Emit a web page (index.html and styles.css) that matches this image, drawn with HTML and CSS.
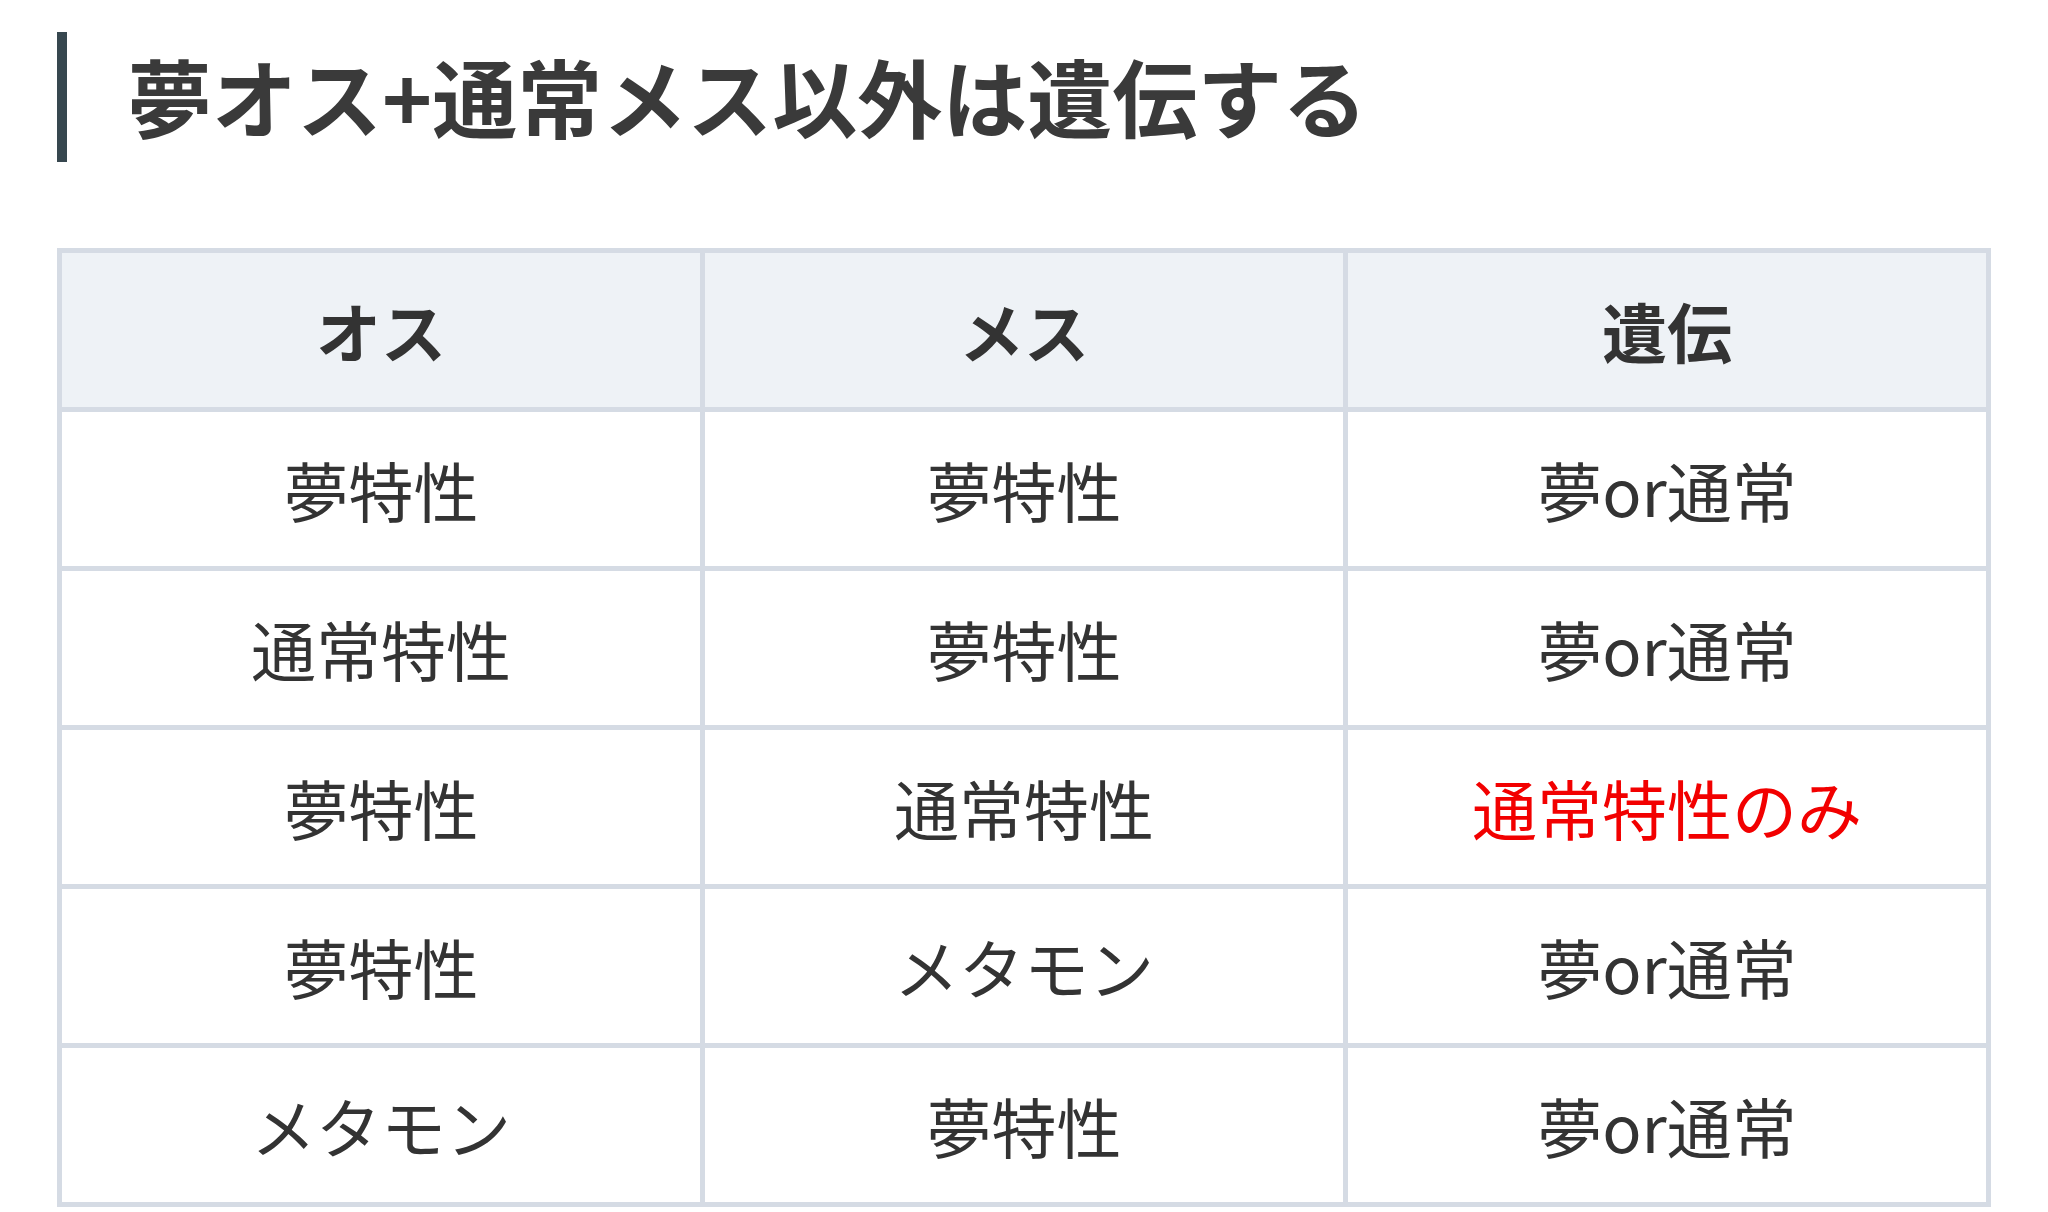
FILE: index.html
```html
<!DOCTYPE html>
<html lang="ja">
<head>
<meta charset="utf-8">
<title>夢特性の遺伝</title>
<link rel="stylesheet" href="styles.css">
</head>
<body>
<h2 class="heading">夢オス+通常メス以外は遺伝する</h2>
<table class="inherit-table">
  <thead>
    <tr><th>オス</th><th>メス</th><th>遺伝</th></tr>
  </thead>
  <tbody>
    <tr><td>夢特性</td><td>夢特性</td><td>夢or通常</td></tr>
    <tr><td>通常特性</td><td>夢特性</td><td>夢or通常</td></tr>
    <tr><td>夢特性</td><td>通常特性</td><td class="red">通常特性のみ</td></tr>
    <tr><td>夢特性</td><td>メタモン</td><td>夢or通常</td></tr>
    <tr><td>メタモン</td><td>夢特性</td><td>夢or通常</td></tr>
  </tbody>
</table>
</body>
</html>
```
FILE: styles.css
```css
html, body {
  margin: 0;
  padding: 0;
  background: #ffffff;
}
body {
  padding: 0 57px;
  font-family: "Noto Sans CJK JP", "Noto Sans", sans-serif;
  color: #333333;
}
.heading {
  margin: 32px 0 0 0;
  height: 130px;
  line-height: 126px;
  border-left: 10px solid #37474f;
  padding-left: 60px;
  font-size: 85px;
  font-weight: 700;
  color: #3a3a3a;
  letter-spacing: 0;
  white-space: nowrap;
}
.inherit-table {
  margin-top: 86px;
  width: 100%;
  table-layout: fixed;
  border-collapse: separate;
  border-spacing: 0;
  border-top: 5px solid #d5dbe4;
  border-left: 5px solid #d5dbe4;
}
.inherit-table th,
.inherit-table td {
  height: 154px;
  padding: 0;
  text-align: center;
  vertical-align: middle;
  border-right: 5px solid #d5dbe4;
  border-bottom: 5px solid #d5dbe4;
  font-size: 65px;
  line-height: 1;
  color: #333333;
}
.inherit-table th {
  background: #eef2f6;
  font-weight: 700;
}
.inherit-table td {
  font-weight: 400;
  background: #ffffff;
}
.inherit-table td.red {
  color: #f20000;
}
```
